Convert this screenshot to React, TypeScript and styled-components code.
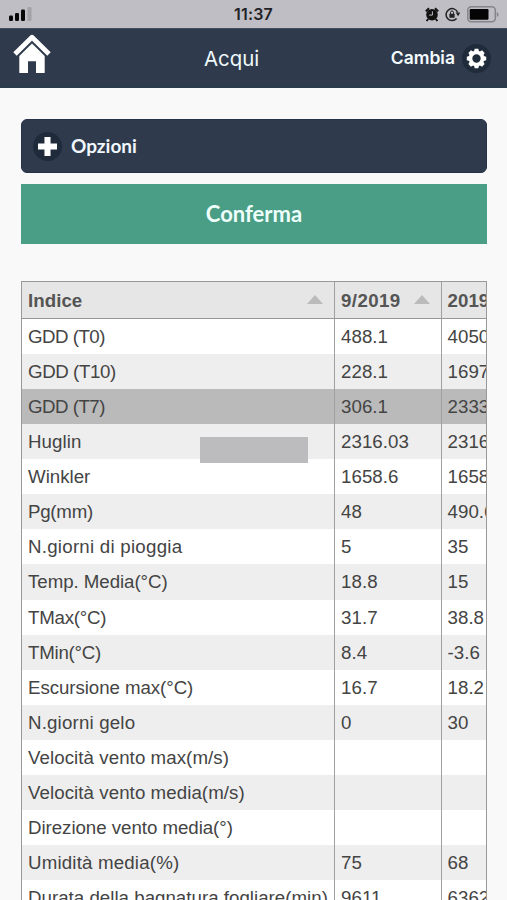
import React from 'react';
import styled, { createGlobalStyle } from 'styled-components';

const GlobalStyle = createGlobalStyle`
  * { box-sizing: border-box; }
  html, body { margin: 0; height: 900px; overflow: hidden; background: #f9f9f9; }
  body { font-family: 'Liberation Sans', Arial, sans-serif; color: #444; }
  svg { display: block; }
`;

const Screen = styled.div`
  position: relative;
  width: 507px;
  height: 900px;
  overflow: hidden;
  background: #f9f9f9;
`;

const StatusBar = styled.div`
  display: grid;
  grid-template-columns: 1fr auto 1fr;
  align-items: center;
  height: 28px;
  padding: 0 8px 0 9px;
  background: #bfbec4;
`;

const Clock = styled.time`
  margin-right: 1px;
  font: 600 16px/28px Inter, sans-serif;
  letter-spacing: 0.2px;
  color: #222226;
`;

const StatusIcons = styled.div`
  display: flex;
  justify-content: flex-end;
  align-items: center;
  gap: 6px;
`;

const NavBar = styled.header`
  display: grid;
  grid-template-columns: 192px 1fr auto;
  align-items: center;
  height: 60px;
  padding: 0 16px 0 12px;
  background: #2f3b4d;
  border-top: 1px solid #435062;
  border-bottom: 2px solid #2b3a4c;
`;

const HomeLink = styled.a`
  display: block;
  margin-top: -7px;
`;

const Title = styled.h1`
  margin: 3px 0 0;
  font: 400 20.4px/28px Inter, sans-serif;
  color: #f0f9fc;
`;

const ChangeButton = styled.div`
  display: flex;
  justify-content: flex-end;
  align-items: center;
  gap: 7px;
  padding-top: 1px;
  font: 600 17.5px/28px Inter, sans-serif;
  color: #f4fbff;
`;

const IconDisc = styled.span`
  display: grid;
  place-items: center;
  width: 29px;
  height: 29px;
  border-radius: 50%;
  background: #1f2b3b;
`;

const Content = styled.main`
  padding: 31px 20px 0 21px;
`;

const OptionsButton = styled.div`
  display: flex;
  align-items: center;
  gap: 9px;
  height: 54px;
  padding-left: 11px;
  border: 1px solid #253247;
  border-radius: 6px;
  background: #2f3b4d;
  font: 700 19px/28px Lato, sans-serif;
  color: #f0f7fc;
`;

const ConfirmButton = styled.div`
  height: 60px;
  margin: 11px 0 37px;
  background: #4a9e85;
  font: 700 22px/60px Lato, sans-serif;
  text-align: center;
  color: #eefffc;
`;

const TableFrame = styled.div`
  height: 640px;
  overflow: hidden;
  border: 1px solid #999;
  background: #fff;
`;

const Row = styled.div<{ $tone: string }>`
  display: grid;
  grid-template-columns: 313px 106.6px 107px;
  height: 35.07px;
  background: ${({ $tone }) => $tone};
`;

const HeaderRow = styled(Row)`
  height: 37px;
  border-bottom: 1px solid #969696;
`;

const Cell = styled.div<{ $tracking?: number }>`
  padding-left: 6px;
  border-right: 1px solid #a0a0a0;
  font-size: 18.7px;
  line-height: 36px;
  letter-spacing: ${({ $tracking = 0 }) => $tracking}px;
  white-space: nowrap;
  color: #444;
`;

const HeaderCell = styled(Cell)`
  display: flex;
  align-items: center;
  justify-content: space-between;
  padding-right: 11px;
  font-weight: 700;
  color: #555;
`;

const HeaderLabel = styled.span`
  padding-top: 1px;
`;

const SortMark = styled.svg`
  margin-bottom: 2px;
`;

const RedactedLabel = styled.div`
  position: absolute;
  left: 200px;
  top: 437px;
  width: 108px;
  height: 26px;
  background: #bcbcbf;
`;

const columns = [
  { label: 'Indice', tracking: 0.05 },
  { label: '9/2019', tracking: 0.4 },
  { label: '2019', tracking: 0 },
];

const rows = [
  { label: 'GDD (T0)', tracking: -0.5, month: '488.1', year: '4050.4' },
  { label: 'GDD (T10)', tracking: -0.4, month: '228.1', year: '1697.2' },
  { label: 'GDD (T7)', tracking: -0.5, month: '306.1', year: '2333.1' },
  { label: 'Huglin', tracking: 0.1, month: '2316.03', year: '2316.03' },
  { label: 'Winkler', tracking: 0, month: '1658.6', year: '1658.6' },
  { label: 'Pg(mm)', tracking: -0.25, month: '48', year: '490.6' },
  { label: 'N.giorni di pioggia', tracking: 0.25, month: '5', year: '35' },
  { label: 'Temp. Media(°C)', tracking: -0.05, month: '18.8', year: '15' },
  { label: 'TMax(°C)', tracking: -0.25, month: '31.7', year: '38.8' },
  { label: 'TMin(°C)', tracking: -0.25, month: '8.4', year: '-3.6' },
  { label: 'Escursione max(°C)', tracking: -0.06, month: '16.7', year: '18.2' },
  { label: 'N.giorni gelo', tracking: 0.18, month: '0', year: '30' },
  { label: 'Velocità vento max(m/s)', tracking: 0.07, month: '', year: '' },
  { label: 'Velocità vento media(m/s)', tracking: 0.07, month: '', year: '' },
  { label: 'Direzione vento media(°)', tracking: -0.04, month: '', year: '' },
  { label: 'Umidità media(%)', tracking: 0.18, month: '75', year: '68' },
  { label: 'Durata della bagnatura fogliare(min)', tracking: 0.02, month: '9611', year: '63620' },
];

const selectedRow = 2;

const rowTone = (index: number) => {
  if (index === selectedRow) return '#bababa';
  return index % 2 ? '#eeeeee' : '#ffffff';
};

const SignalIcon = () => (
  <svg width="24" height="16" viewBox="0 0 24 16">
    <rect x="0" y="9.5" width="4" height="5.5" rx="1.3" fill="#080808" />
    <rect x="6" y="7" width="4" height="8" rx="1.3" fill="#080808" />
    <rect x="12" y="3.5" width="4" height="11.5" rx="1.3" fill="#080808" />
    <rect x="18.5" y="1" width="4" height="14" rx="1.3" fill="#a3a2a7" />
  </svg>
);

const AlarmIcon = () => (
  <svg width="14" height="15" viewBox="0 0 14 15">
    <circle cx="7" cy="7.7" r="5.8" fill="#111" />
    <path d="M.8 4.4 4 1.2M13.2 4.4 10 1.2M3.2 12l-1.6 2M10.8 12l1.6 2" stroke="#111" strokeWidth="2" />
    <path d="M7.4 4.4v3.7H4.2" fill="none" stroke="#bfbec4" strokeWidth="1" />
  </svg>
);

const RotationLockIcon = () => (
  <svg width="16" height="15" viewBox="0 0 16 15">
    <path d="M12.6 5.2A6 6 0 1 0 11.6 11.6" fill="none" stroke="#222" strokeWidth="1.5" />
    <path d="M10.6 5.6h4.6l-2.1 3.6z" fill="#222" />
    <rect x="4.4" y="6.8" width="5.2" height="4" rx=".4" fill="#222" />
    <path d="M5.5 7V5.5a1.5 1.5 0 0 1 3 0V7" fill="none" stroke="#222" />
  </svg>
);

const BatteryIcon = () => (
  <svg width="32" height="17" viewBox="0 0 32 17">
    <rect x=".8" y=".8" width="27.5" height="15" rx="3.5" fill="none" stroke="#85848a" strokeWidth="1.5" />
    <rect x="2.7" y="3" width="18.8" height="10.7" rx="1.2" fill="#050505" />
    <path d="M29.8 6v5c2.3-1 2.3-4 0-5" fill="#85848a" />
  </svg>
);

const HomeIcon = () => (
  <svg width="40" height="40" viewBox="0 0 40 40">
    <path d="M3 20 20 3.2 37 20" fill="none" stroke="#fff" strokeWidth="4.8" strokeLinejoin="round" />
    <path d="M7.3 22 20 9.6 32.7 22V39H24V27.2h-8V39H7.3z" fill="#fff" />
  </svg>
);

const gearTeeth = [0, 45, 90, 135, 180, 225, 270, 315];

const GearIcon = () => (
  <svg width="21" height="21" viewBox="-10.5 -10.5 21 21">
    <circle r="6" fill="none" stroke="#fff" strokeWidth="3.6" />
    {gearTeeth.map((angle) => (
      <path key={angle} d="M-2.7-6.4-1.8-9.7H1.8L2.7-6.4z" fill="#fff" transform={`rotate(${angle})`} />
    ))}
  </svg>
);

const PlusIcon = () => (
  <svg width="19" height="19" viewBox="0 0 20 20">
    <path d="M6.8 0h6.4v6.8H20v6.4h-6.8V20H6.8v-6.8H0V6.8h6.8z" fill="#fff" />
  </svg>
);

const SortIcon = () => (
  <SortMark width="16" height="9" viewBox="0 0 16 9">
    <path d="M0 9 8 0l8 9z" fill="#bbb" />
  </SortMark>
);

export default function App() {
  return (
    <>
      <GlobalStyle />
      <Screen>
        <StatusBar>
          <SignalIcon />
          <Clock>11:37</Clock>
          <StatusIcons>
            <AlarmIcon />
            <RotationLockIcon />
            <BatteryIcon />
          </StatusIcons>
        </StatusBar>
        <NavBar>
          <HomeLink><HomeIcon /></HomeLink>
          <Title>Acqui</Title>
          <ChangeButton>
            Cambia
            <IconDisc><GearIcon /></IconDisc>
          </ChangeButton>
        </NavBar>
        <Content>
          <OptionsButton>
            <IconDisc><PlusIcon /></IconDisc>
            Opzioni
          </OptionsButton>
          <ConfirmButton>Conferma</ConfirmButton>
          <TableFrame>
            <HeaderRow $tone="#e6e6e6">
              {columns.map(({ label, tracking }) => (
                <HeaderCell key={label} $tracking={tracking}>
                  <HeaderLabel>{label}</HeaderLabel>
                  <SortIcon />
                </HeaderCell>
              ))}
            </HeaderRow>
            {rows.map(({ label, tracking, month, year }, index) => (
              <Row key={label} $tone={rowTone(index)}>
                <Cell $tracking={tracking}>{label}</Cell>
                <Cell $tracking={0.06}>{month}</Cell>
                <Cell>{year}</Cell>
              </Row>
            ))}
          </TableFrame>
        </Content>
        <RedactedLabel />
      </Screen>
    </>
  );
}
